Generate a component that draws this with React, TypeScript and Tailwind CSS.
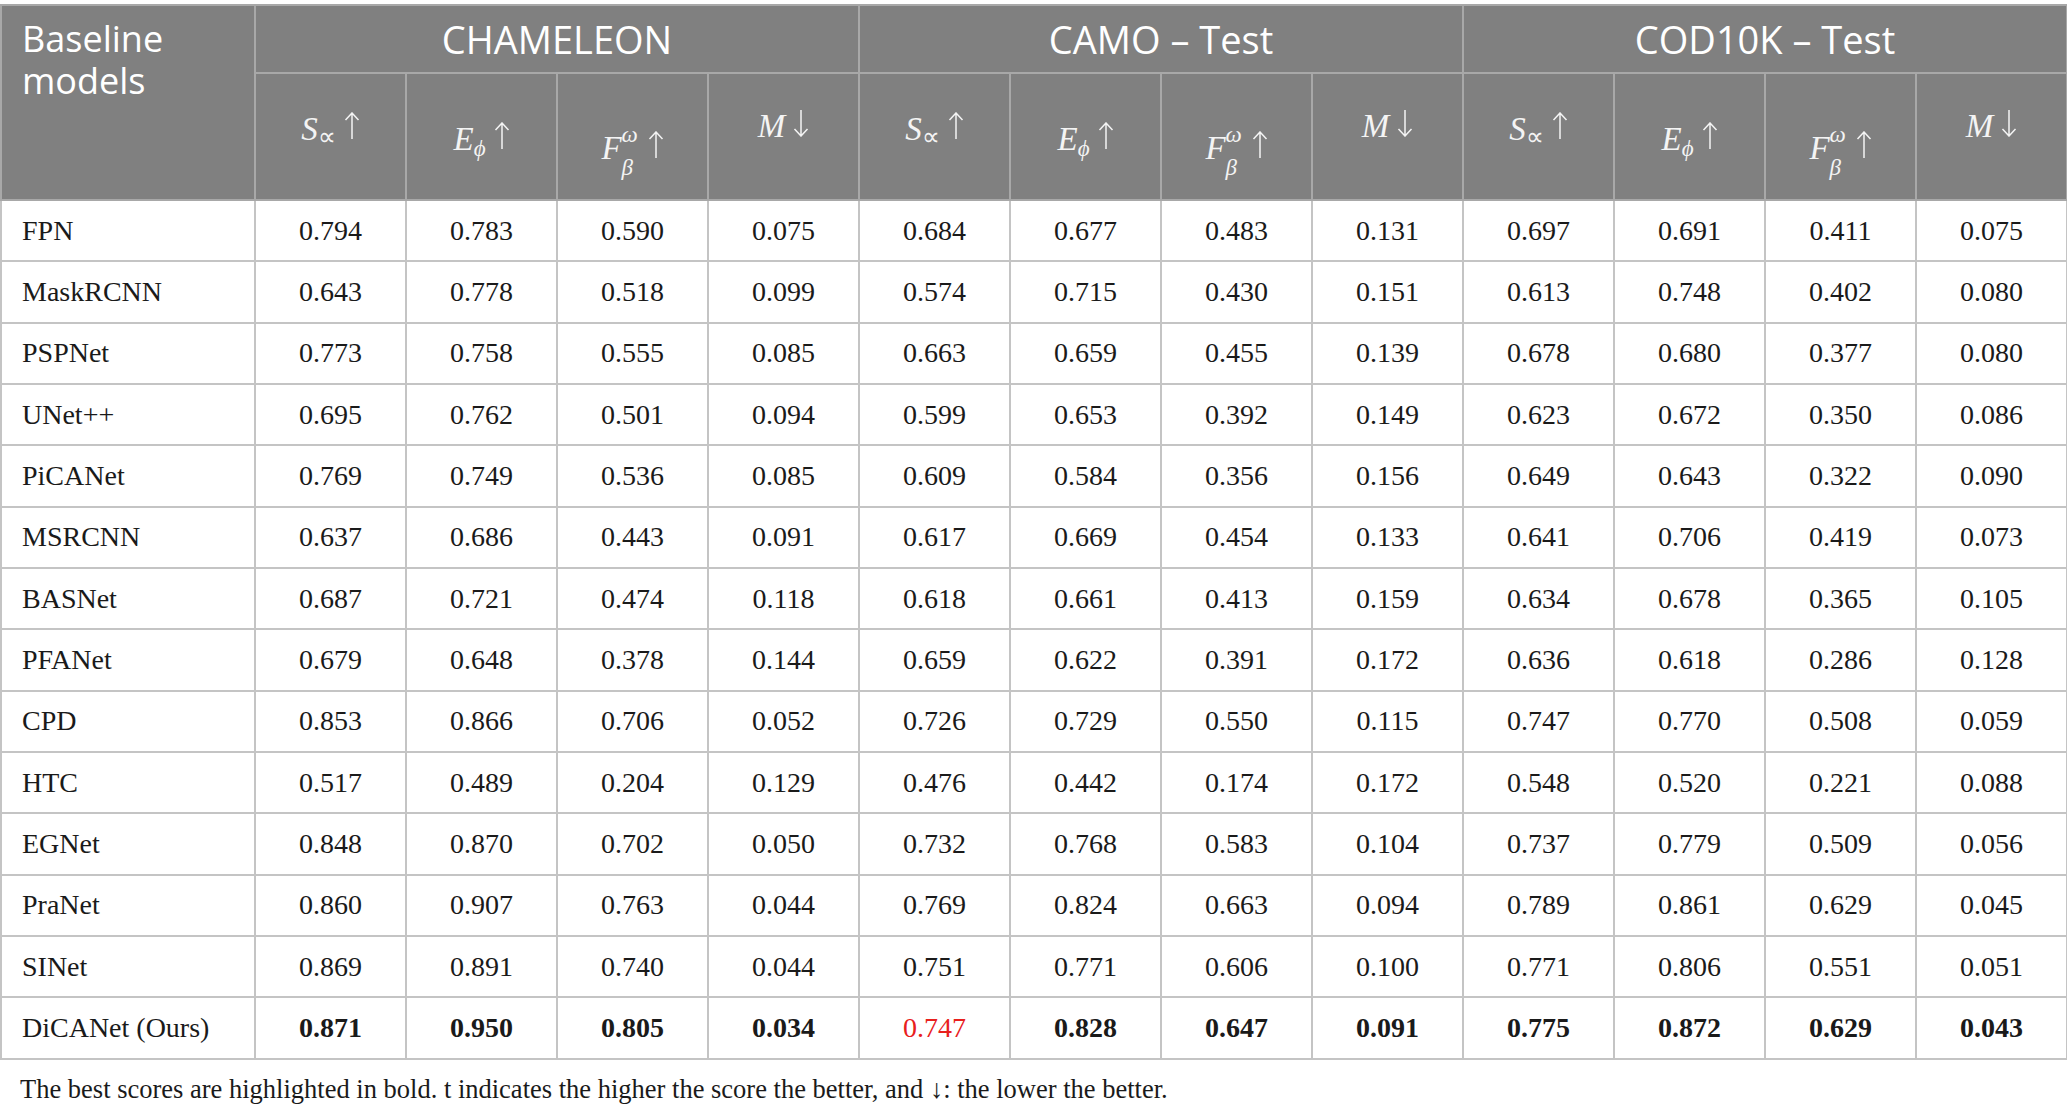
import React from 'react';

type Metric = 'S' | 'E' | 'F' | 'M';

const GROUPS = ['CHAMELEON', 'CAMO – Test', 'COD10K – Test'];
const METRICS: Metric[] = ['S', 'E', 'F', 'M'];

const ROWS: string[][] = [
  ['FPN', '0.794', '0.783', '0.590', '0.075', '0.684', '0.677', '0.483', '0.131', '0.697', '0.691', '0.411', '0.075'],
  ['MaskRCNN', '0.643', '0.778', '0.518', '0.099', '0.574', '0.715', '0.430', '0.151', '0.613', '0.748', '0.402', '0.080'],
  ['PSPNet', '0.773', '0.758', '0.555', '0.085', '0.663', '0.659', '0.455', '0.139', '0.678', '0.680', '0.377', '0.080'],
  ['UNet++', '0.695', '0.762', '0.501', '0.094', '0.599', '0.653', '0.392', '0.149', '0.623', '0.672', '0.350', '0.086'],
  ['PiCANet', '0.769', '0.749', '0.536', '0.085', '0.609', '0.584', '0.356', '0.156', '0.649', '0.643', '0.322', '0.090'],
  ['MSRCNN', '0.637', '0.686', '0.443', '0.091', '0.617', '0.669', '0.454', '0.133', '0.641', '0.706', '0.419', '0.073'],
  ['BASNet', '0.687', '0.721', '0.474', '0.118', '0.618', '0.661', '0.413', '0.159', '0.634', '0.678', '0.365', '0.105'],
  ['PFANet', '0.679', '0.648', '0.378', '0.144', '0.659', '0.622', '0.391', '0.172', '0.636', '0.618', '0.286', '0.128'],
  ['CPD', '0.853', '0.866', '0.706', '0.052', '0.726', '0.729', '0.550', '0.115', '0.747', '0.770', '0.508', '0.059'],
  ['HTC', '0.517', '0.489', '0.204', '0.129', '0.476', '0.442', '0.174', '0.172', '0.548', '0.520', '0.221', '0.088'],
  ['EGNet', '0.848', '0.870', '0.702', '0.050', '0.732', '0.768', '0.583', '0.104', '0.737', '0.779', '0.509', '0.056'],
  ['PraNet', '0.860', '0.907', '0.763', '0.044', '0.769', '0.824', '0.663', '0.094', '0.789', '0.861', '0.629', '0.045'],
  ['SINet', '0.869', '0.891', '0.740', '0.044', '0.751', '0.771', '0.606', '0.100', '0.771', '0.806', '0.551', '0.051'],
  ['DiCANet (Ours)', '0.871', '0.950', '0.805', '0.034', '0.747', '0.828', '0.647', '0.091', '0.775', '0.872', '0.629', '0.043'],
];

const sans = "font-['Open_Sans','Noto_Sans',sans-serif]";
const serif = "font-['Liberation_Serif','Times_New_Roman',serif]";

// thin typeset arrow, bottom sits on the letter baseline
function Arrow({ down }: { down?: boolean }) {
  return (
    <svg width="16" height="28" viewBox="0 0 16 28" className="ml-[8px] shrink-0" fill="none" stroke="currentColor" strokeWidth="1.5">
      {down ? (
        <path d="M8 1 V27 M1.5 20 L8 27 L14.5 20" />
      ) : (
        <path d="M8 1 V27 M1.5 8 L8 1 L14.5 8" />
      )}
    </svg>
  );
}

// math-ish header labels, each sits on its own baseline like the typeset original
function MetricLabel({ m }: { m: Metric }) {
  if (m === 'S') {
    return (
      <div className="pt-[31px] flex justify-center items-baseline">
        <span className="italic text-[33px]">S</span>
        <span className="text-[25px] relative top-[5px]">∝</span>
        <Arrow />
      </div>
    );
  }
  if (m === 'E') {
    return (
      <div className="pt-[41px] flex justify-center items-baseline">
        <span className="italic text-[33px]">E</span>
        <span className="italic text-[23px] relative top-[6px]">ϕ</span>
        <Arrow />
      </div>
    );
  }
  if (m === 'F') {
    return (
      <div className="pt-[50px] flex justify-center items-baseline">
        <span className="italic text-[33px]">F</span>
        <span className="relative inline-block w-[18px]">
          <span className="absolute left-0 -top-[41px] italic text-[23px]">ω</span>
          <span className="absolute left-0 top-[-8px] italic text-[23px]">β</span>
        </span>
        <Arrow />
      </div>
    );
  }
  return (
    <div className="pt-[28px] flex justify-center items-baseline">
      <span className="italic text-[33px]">M</span>
      <Arrow down />
    </div>
  );
}

export default function App() {
  return (
    <div className="w-[2067px] min-h-[1113px] bg-white pt-[4px]">
      <table className="table-fixed border-collapse w-[2066px]">
        <colgroup>
          <col className="w-[254px]" />
          {Array.from({ length: 12 }).map((_, i) => (
            <col key={i} className="w-[151px]" />
          ))}
        </colgroup>
        <thead>
          <tr className="h-[68px] bg-[#808080] text-white">
            <th
              rowSpan={2}
              className={`${sans} border-2 border-[#a8a8a8] align-top text-left font-normal text-[36px] leading-[42px] pl-[20px] pr-[20px] pt-[12px]`}
            >
              Baseline models
            </th>
            {GROUPS.map(g => (
              <th
                key={g}
                colSpan={4}
                className={`${sans} border-2 border-[#a8a8a8] font-normal text-[38px] leading-[44px] text-center`}
              >
                {g}
              </th>
            ))}
          </tr>
          <tr className="h-[127px] bg-[#808080] text-[#f4f4f4]">
            {GROUPS.flatMap(g =>
              METRICS.map(m => (
                <th key={g + m} className={`${serif} border-2 border-[#a8a8a8] font-normal align-top p-0`}>
                  <MetricLabel m={m} />
                </th>
              ))
            )}
          </tr>
        </thead>
        <tbody>
          {ROWS.map((row, ri) => {
            const last = ri === ROWS.length - 1;
            return (
              <tr key={row[0]} className="h-[61.35px]">
                {row.map((cell, ci) => {
                  const red = last && ci === 5;
                  return (
                    <td
                      key={ci}
                      className={`${serif} border-2 border-[#c4c4c4] text-[28px] ${ci === 0 ? 'text-left pl-[20px]' : 'text-center'} ${red ? 'text-[#e8201c]' : 'text-[#1a1a1a]'} ${last && ci > 0 && !red ? 'font-bold' : 'font-normal'}`}
                    >
                      {cell}
                    </td>
                  );
                })}
              </tr>
            );
          })}
        </tbody>
      </table>
      <p className={`${serif} text-[26.5px] leading-[34px] text-[#1a1a1a] pl-[20px] pt-[12px]`}>
        The best scores are highlighted in bold. t indicates the higher the score the better, and ↓: the lower the better.
      </p>
    </div>
  );
}
